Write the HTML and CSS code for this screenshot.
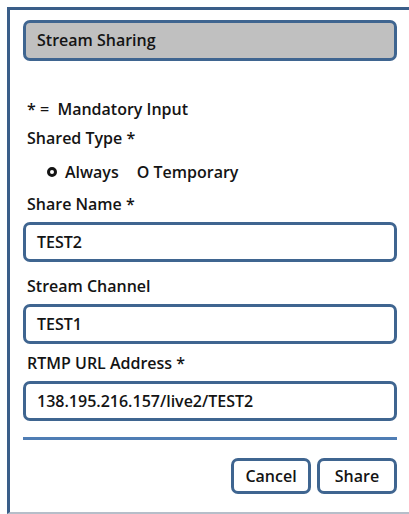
FILE: index.html
```html
<!DOCTYPE html>
<html lang="en">
<head>
<meta charset="utf-8">
<title>Stream Sharing</title>
<link rel="stylesheet" href="styles.css">
</head>
<body>
<div class="frame">
  <div class="panel">
    <div class="title">Stream Sharing</div>
    <div class="label legend">* =&nbsp; Mandatory Input</div>
    <div class="label gap-9">Shared Type *</div>
    <div class="radios">
      <span class="radio"><span class="dot"></span>Always</span>
      <span class="radio">O Temporary</span>
    </div>
    <div class="label gap-12">Share Name *</div>
    <div class="field">TEST2</div>
    <div class="label gap-14">Stream Channel</div>
    <div class="field">TEST1</div>
    <div class="label gap-9">RTMP URL Address *</div>
    <div class="field">138.195.216.157/live2/TEST2</div>
    <div class="rule"></div>
    <div class="actions">
      <button class="btn">Cancel</button>
      <button class="btn">Share</button>
    </div>
  </div>
</div>
</body>
</html>
```
FILE: styles.css
```css
html, body {
  margin: 0;
  padding: 0;
  background: #fff;
  overflow: hidden;
}
body {
  font-family: "Open Sans", "Noto Sans", sans-serif;
  font-weight: 600;
  font-size: 16px;
  color: #141414;
}
.frame {
  margin: 7px 0 0 7px;
  height: 502px;
  border-left: 3px solid #3a5e89;
  border-top: 3px solid #3a5e89;
  border-bottom: 2px solid #b6bec9;
}
.panel {
  width: 374px;
  padding: 10px 0 0 13px;
  display: flex;
  flex-direction: column;
}
.title {
  height: 35px;
  line-height: 35px;
  border: 3px solid #3f6590;
  border-radius: 7px;
  background: #c0c0c0;
  padding-left: 11px;
}
.label {
  height: 20px;
  line-height: 20px;
  padding-left: 4px;
}
.legend { margin-top: 38px; }
.gap-9 { margin-top: 9px; }
.gap-12 { margin-top: 12px; }
.gap-14 { margin-top: 14px; }
.radios {
  margin-top: 14px;
  height: 20px;
  line-height: 20px;
  padding-left: 24px;
  display: flex;
  gap: 18px;
}
.radio {
  display: flex;
  align-items: center;
}
.dot {
  width: 4px;
  height: 4px;
  border: 3px solid #141414;
  border-radius: 50%;
  margin-right: 8px;
}
.field {
  margin-top: 8px;
  height: 34px;
  line-height: 34px;
  border: 3px solid #3f6590;
  border-radius: 7px;
  padding-left: 11px;
}
.rule {
  margin-top: 16px;
  height: 3px;
  background: #4f7db4;
}
.actions {
  margin-top: 18px;
  display: flex;
  justify-content: flex-end;
  gap: 6px;
}
.btn {
  width: 80px;
  height: 36px;
  border: 3px solid #3f6590;
  border-radius: 7px;
  background: #fff;
  font: inherit;
  color: #141414;
  padding: 0;
}
```
